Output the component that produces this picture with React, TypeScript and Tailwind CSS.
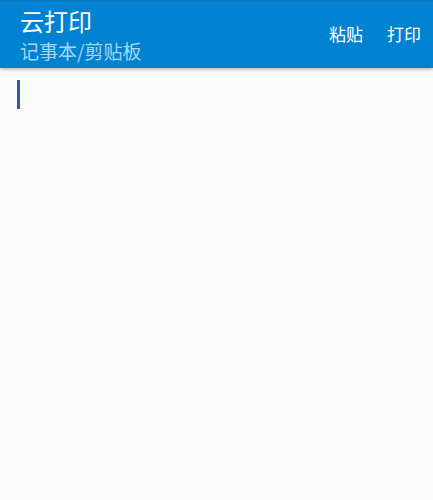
import { useState } from "react";

export default function App() {
  const [text, setText] = useState("");

  return (
    <div className="flex min-h-screen flex-col bg-[#fbfbfb] font-['Noto_Sans_CJK_SC',sans-serif]">
      <header className="z-10 flex h-[68px] items-center justify-between border-t border-[#0878b8] bg-[#0082d0] pl-5 pr-3 text-white shadow-[0_1px_4px_rgba(0,0,0,0.35)]">
        <div className="flex flex-col">
          <h1 className="text-2xl leading-8 font-normal">云打印</h1>
          <p className="text-[19px] leading-7 font-normal text-[#a6d6f2]">记事本/剪贴板</p>
        </div>
        <nav className="flex gap-6 pb-px text-[17px] leading-6">
          <button type="button" onClick={() => navigator.clipboard?.readText().then(setText)}>
            粘贴
          </button>
          <button type="button" onClick={() => window.print()}>
            打印
          </button>
        </nav>
      </header>
      <main className="relative flex flex-1">
        <textarea
          aria-label="记事本"
          value={text}
          onChange={(e) => setText(e.target.value)}
          className="flex-1 resize-none bg-transparent px-4 py-3 text-xl leading-[30px] text-gray-800 caret-[#286095] outline-none"
        />
        {text === "" && (
          <span className="pointer-events-none absolute left-[17px] top-3 h-[29px] w-[3px] bg-[#286095]" />
        )}
      </main>
    </div>
  );
}
